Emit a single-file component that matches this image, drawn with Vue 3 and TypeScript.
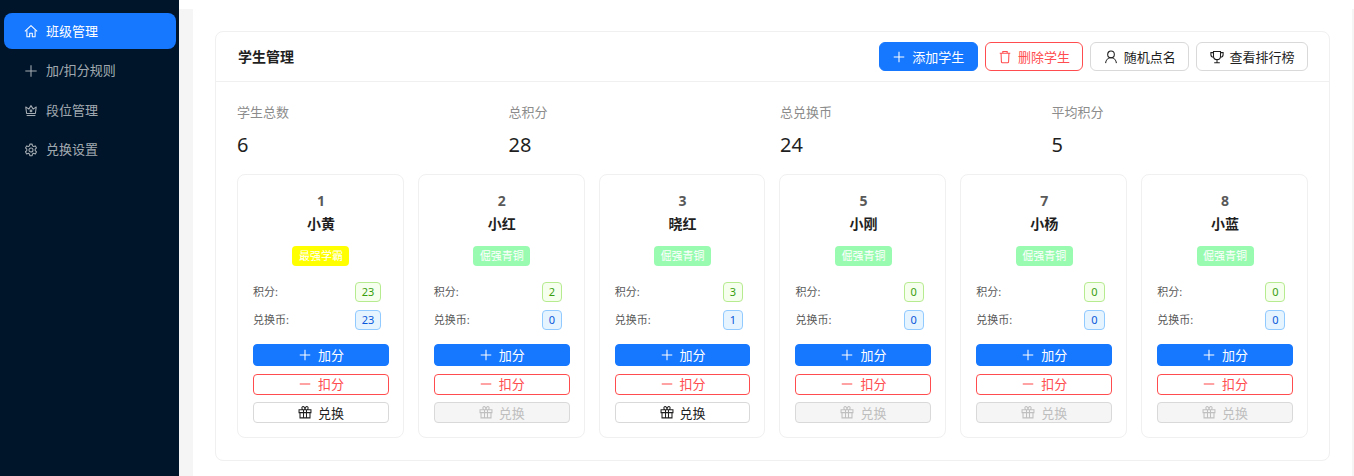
<script setup lang="ts">
interface Student {
  id: number
  name: string
  rank: string
  rankColor: string
  score: number
  coins: number
}

const menu = [
  { label: '班级管理', icon: 'home', active: true },
  { label: '加/扣分规则', icon: 'plus', active: false },
  { label: '段位管理', icon: 'crown', active: false },
  { label: '兑换设置', icon: 'gear', active: false },
]

const stats = [
  { label: '学生总数', value: 6 },
  { label: '总积分', value: 28 },
  { label: '总兑换币', value: 24 },
  { label: '平均积分', value: 5 },
]

const students: Student[] = [
  { id: 1, name: '小黄', rank: '最强学霸', rankColor: '#ffff00', score: 23, coins: 23 },
  { id: 2, name: '小红', rank: '倔强青铜', rankColor: '#98fbb0', score: 2, coins: 0 },
  { id: 3, name: '晓红', rank: '倔强青铜', rankColor: '#98fbb0', score: 3, coins: 1 },
  { id: 5, name: '小刚', rank: '倔强青铜', rankColor: '#98fbb0', score: 0, coins: 0 },
  { id: 7, name: '小杨', rank: '倔强青铜', rankColor: '#98fbb0', score: 0, coins: 0 },
  { id: 8, name: '小蓝', rank: '倔强青铜', rankColor: '#98fbb0', score: 0, coins: 0 },
]
</script>

<template>
  <div class="layout">
    <aside class="sider">
      <div v-for="item in menu" :key="item.label" class="menu-item" :class="{ active: item.active }">
        <svg class="menu-icon" viewBox="0 0 16 16" fill="none" stroke="currentColor" stroke-width="1.2" stroke-linejoin="round">
          <template v-if="item.icon === 'home'">
            <path d="M1 8.500 8 1.800l7 6.700" />
            <path d="M3.300 7v7.500h3.200v-4h3v4h3.200V7" />
          </template>
          <path v-else-if="item.icon === 'plus'" d="M8 1.500v13M1.500 8h13" />
          <template v-else-if="item.icon === 'crown'">
            <path d="M2 4.500 5.500 7 8 3l2.500 4L14 4.500 13 12H3z" />
            <path d="M3 14.300h10" />
            <circle cx="8" cy="9" r="1" />
          </template>
          <template v-else>
            <path d="M6.700 1.300h2.600l.4 2 1.300.7 2-.7 1.300 2.400-1.500 1.400v1.600l1.500 1.400-1.300 2.400-2-.7-1.300.7-.4 2H6.700l-.4-2-1.300-.7-2 .7L1.700 10l1.500-1.400V7L1.700 5.600 3 3.300l2 .7 1.300-.7z" />
            <circle cx="8" cy="8" r="2.300" />
          </template>
        </svg>
        <span class="menu-text">{{ item.label }}</span>
      </div>
    </aside>

    <div class="right">
      <div class="topbar"></div>
      <div class="page">
        <main class="content">
          <section class="panel">
            <header class="panel-head">
              <h2 class="panel-title">学生管理</h2>
              <div class="actions">
                <button class="btn primary">
                  <svg class="ico" viewBox="0 0 16 16" fill="none" stroke="currentColor" stroke-width="1.200"><path d="M8 2v12M2 8h12" /></svg>
                  添加学生
                </button>
                <button class="btn danger">
                  <svg class="ico" viewBox="0 0 16 16" fill="none" stroke="currentColor" stroke-width="1.200"><path d="M2 3.800h12M5.500 3.800V1.800h5v2M3.500 3.800l.4 9.800q.1 1 1.100 1h6q1 0 1.100-1l.4-9.800" /></svg>
                  删除学生
                </button>
                <button class="btn">
                  <svg class="ico" viewBox="0 0 16 16" fill="none" stroke="currentColor" stroke-width="1.200"><circle cx="8" cy="5" r="3.800" /><path d="M1.800 15c.3-3.500 2.900-6.200 6.200-6.200s5.900 2.700 6.200 6.200" /></svg>
                  随机点名
                </button>
                <button class="btn">
                  <svg class="ico" viewBox="0 0 16 16" fill="none" stroke="currentColor" stroke-width="1.200"><path d="M4 1.800h8v5.200a4 4 0 0 1-8 0zM4 3H1v2.100c0 1.700 1.300 3.100 3.300 3.200M12 3h3v2.100c0 1.700-1.300 3.100-3.300 3.200M8 11v3.200M4.800 14.500h6.400" /></svg>
                  查看排行榜
                </button>
              </div>
            </header>

            <div class="panel-body">
              <div class="stats">
                <div v-for="s in stats" :key="s.label" class="stat">
                  <div class="stat-label">{{ s.label }}</div>
                  <div class="stat-value">{{ s.value }}</div>
                </div>
              </div>

              <div class="students">
                <article v-for="st in students" :key="st.id" class="student">
                  <div class="student-id">{{ st.id }}</div>
                  <div class="student-name">{{ st.name }}</div>
                  <div class="rank" :style="{ background: st.rankColor }">{{ st.rank }}</div>

                  <div class="row">
                    <span class="row-label">积分:</span>
                    <span class="tag green">{{ st.score }}</span>
                  </div>
                  <div class="row">
                    <span class="row-label">兑换币:</span>
                    <span class="tag blue">{{ st.coins }}</span>
                  </div>

                  <div class="ops">
                    <button class="btn small primary">
                      <svg class="ico" viewBox="0 0 16 16" fill="none" stroke="currentColor" stroke-width="1.200"><path d="M8 2v12M2 8h12" /></svg>
                      加分
                    </button>
                    <button class="btn small danger">
                      <svg class="ico" viewBox="0 0 16 16" fill="none" stroke="currentColor" stroke-width="1.200"><path d="M2 8h12" /></svg>
                      扣分
                    </button>
                    <button class="btn small" :class="{ disabled: st.coins === 0 }">
                      <svg class="ico" viewBox="0 0 16 16" fill="none" stroke="currentColor" stroke-width="1.200"><path d="M1.200 5.500h13.600v3.200H1.200zM2.300 8.700v6h11.400v-6M6.300 5.500v9.200M9.700 5.500v9.200M5.500 5.500C3.800 4 4.300 1.500 6 1.800 7 2 8 3.800 8 5.500 8 3.800 9 2 10 1.800c1.700-.3 2.200 2.200.5 3.700" /></svg>
                      兑换
                    </button>
                  </div>
                </article>
              </div>
            </div>
          </section>
        </main>
      </div>
    </div>
  </div>
</template>

<style>
html,
body {
  margin: 0;
  background: #fff;
  overflow: hidden;
}
</style>

<style scoped>
.layout {
  display: flex;
  height: 476px;
  font-family: "Noto Sans", "Noto Sans CJK SC", sans-serif;
  font-size: 13px;
  color: #1f1f1f;
}

.sider {
  width: 179px;
  flex: none;
  box-sizing: border-box;
  padding: 13px 3px 0 4px;
  background: #001529;
  display: flex;
  flex-direction: column;
  gap: 3.5px;
}

.menu-item {
  height: 36px;
  display: flex;
  align-items: center;
  gap: 8px;
  padding-left: 20px;
  border-radius: 8px;
  color: rgba(255, 255, 255, .65);
  font-size: 13px;
}

.menu-item.active {
  background: #1677ff;
  color: #fff;
}

.menu-text {
  padding-bottom: 2px;
}

.menu-icon {
  width: 14px;
  height: 14px;
  flex: none;
}

.right {
  flex: 1;
  min-width: 0;
  display: flex;
  flex-direction: column;
}

.topbar {
  height: 9px;
  flex: none;
}

.page {
  flex: 1;
  background: #f5f5f5;
  padding-left: 14px;
  padding-right: 2px;
  min-height: 0;
}

.content {
  height: 100%;
  box-sizing: border-box;
  background: #fff;
  padding: 22px 22px 0;
}

.panel {
  border: 1px solid #f0f0f0;
  border-radius: 8px;
  height: 430px;
  box-sizing: border-box;
}

.panel-head {
  height: 50px;
  box-sizing: border-box;
  border-bottom: 1px solid #f0f0f0;
  display: flex;
  align-items: center;
  justify-content: space-between;
  padding: 0 21px 0 22px;
}

.panel-title {
  margin: 0 0 2px;
  font-size: 14px;
  font-weight: 700;
  color: #1f1f1f;
}

.actions {
  display: flex;
  gap: 7px;
}

.btn {
  display: inline-flex;
  align-items: center;
  justify-content: center;
  gap: 6px;
  height: 29px;
  padding: 0 12.4px;
  box-sizing: border-box;
  border: 1px solid #d9d9d9;
  border-radius: 6px;
  background: #fff;
  color: #1f1f1f;
  font: inherit;
  font-size: 13px;
  white-space: nowrap;
}

.btn.primary {
  background: #1677ff;
  border-color: #1677ff;
  color: #fff;
}

.btn.danger {
  border-color: #ff4d4f;
  color: #ff4d4f;
}

.btn.small {
  width: 100%;
  height: 21px;
  border-radius: 4px;
  padding: 0 0 1px;
}

.btn.small.primary {
  height: 22px;
}

.btn.disabled {
  background: #f5f5f5;
  color: #bfbfbf;
}

.ico {
  width: 14px;
  height: 14px;
  flex: none;
}

.panel-body {
  padding: 20px 21px 0 21px;
}

.stats {
  display: grid;
  grid-template-columns: repeat(4, 1fr);
  column-gap: 15px;
}

.stat-label {
  height: 20px;
  line-height: 20px;
  font-size: 13px;
  color: #8c8c8c;
}

.stat-value {
  margin-top: 7px;
  height: 32px;
  line-height: 32px;
  font-size: 20px;
  color: #1f1f1f;
}

.students {
  margin-top: 13px;
  display: grid;
  grid-template-columns: repeat(6, 1fr);
  column-gap: 14px;
}

.student {
  height: 264px;
  box-sizing: border-box;
  border: 1px solid #f0f0f0;
  border-radius: 8px;
  padding: 15px 14px 0 15px;
  display: flex;
  flex-direction: column;
  align-items: center;
}

.student-id {
  height: 22px;
  line-height: 22px;
  font-size: 14px;
  font-weight: 700;
  color: #595959;
}

.student-name {
  height: 24px;
  line-height: 24px;
  font-size: 14px;
  font-weight: 700;
  color: #1f1f1f;
}

.rank {
  margin-top: 10px;
  width: 57px;
  height: 20px;
  line-height: 20px;
  border-radius: 4px;
  text-align: center;
  font-size: 11px;
  color: #fff;
  white-space: nowrap;
}

.row {
  width: 100%;
  height: 20px;
  margin-top: 8px;
  display: flex;
  align-items: center;
  justify-content: space-between;
  font-size: 11px;
  color: #595959;
}

.rank + .row {
  margin-top: 16px;
}

.row-label {
  padding-bottom: 3px;
}

.tag {
  height: 20px;
  box-sizing: border-box;
  line-height: 18px;
  padding: 0 6px;
  border-radius: 4px;
  text-align: center;
  font-size: 11px;
  border: 1px solid;
  margin-right: 7.5px;
}

.tag.green {
  color: #389e0d;
  background: #f6ffed;
  border-color: #b7eb8f;
}

.tag.blue {
  color: #0958d9;
  background: #e6f4ff;
  border-color: #91caff;
}

.ops {
  width: 100%;
  margin-top: 14px;
  display: flex;
  flex-direction: column;
  gap: 7.5px;
}
</style>
